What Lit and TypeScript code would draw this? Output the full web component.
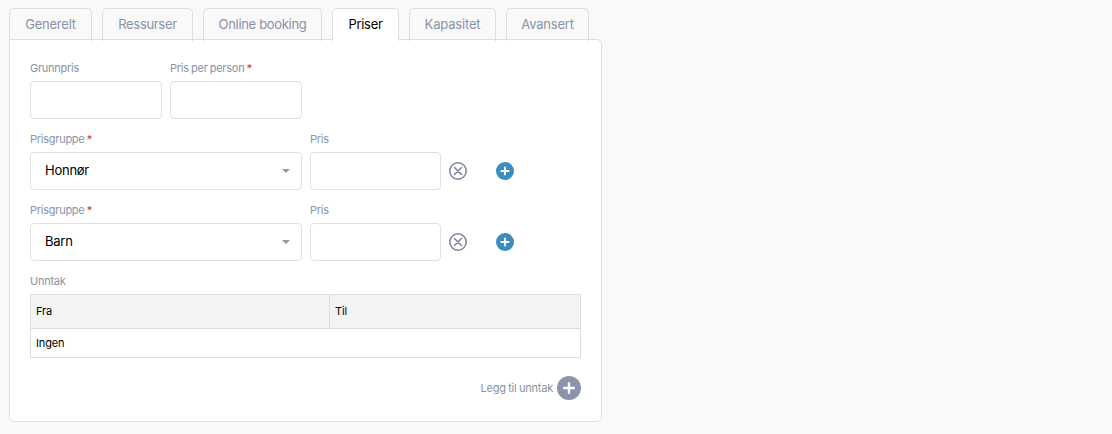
import { LitElement, html, css, svg } from "lit";
import { customElement, property, state } from "lit/decorators.js";
import { classMap } from "lit/directives/class-map.js";

const removeIcon = svg`<svg width="18" height="18" viewBox="0 0 18 18" fill="none" stroke="#7c839a">
  <circle cx="9" cy="9" r="8.2" stroke-width="1.5"/>
  <path d="M5.5 5.5 12.5 12.5M12.5 5.5 5.5 12.5" stroke-width="1.5" stroke-linecap="round"/>
</svg>`;

const addIcon = svg`<svg width="18" height="18" viewBox="0 0 18 18">
  <circle cx="9" cy="9" r="9" fill="#3b8dbd"/>
  <path d="M9 5.4V12.6M5.4 9H12.6" stroke="#fff" stroke-width="1.9" stroke-linecap="round"/>
</svg>`;

const addLargeIcon = svg`<svg width="24" height="24" viewBox="0 0 24 24">
  <circle cx="12" cy="12" r="12" fill="#8c93aa"/>
  <path d="M12 7.2V16.8M7.2 12H16.8" stroke="#fff" stroke-width="2.4" stroke-linecap="round"/>
</svg>`;

@customElement("form-field")
export class FormField extends LitElement {
  @property() label = "";
  @property({ type: Boolean }) required = false;

  static styles = css`
    :host { display: block; }
    .label {
      height: 13px;
      line-height: 13px;
      margin-bottom: 6px;
      font-size: 11px;
      letter-spacing: -0.26px;
      word-spacing: -0.6px;
      color: #8893a7;
      white-space: nowrap;
    }
    .star { color: #d5302c; }
  `;

  render() {
    return html`
      <div class="label">${this.label}${this.required ? html` <span class="star">*</span>` : ""}</div>
      <slot></slot>
    `;
  }
}

@customElement("app-root")
export class AppRoot extends LitElement {
  @state() private active = "Priser";

  private tabs = [
    { name: "Generelt", cls: "w83" },
    { name: "Ressurser", cls: "w91" },
    { name: "Online booking", cls: "w119" },
    { name: "Priser", cls: "w67" },
    { name: "Kapasitet", cls: "w87" },
    { name: "Avansert", cls: "w83" },
  ];
  private groups = ["Honnør", "Barn"];

  static styles = css`
    * { box-sizing: border-box; }
    :host {
      display: block;
      min-height: 434px;
      padding: 8px 0 0 9px;
      background: #f9f9f9;
      font-family: Inter, Roboto, sans-serif;
      color: #000;
    }
    .tabs { display: flex; gap: 10px; }
    .tab {
      position: relative;
      z-index: 1;
      height: 33px;
      margin: 0 0 -2px;
      padding: 0 0 2px;
      border: 1px solid #dedede;
      border-bottom: 0;
      border-radius: 5px 5px 0 0;
      background: transparent;
      font: inherit;
      font-size: 13px;
      line-height: 30px;
      letter-spacing: -0.32px;
      text-align: center;
      white-space: nowrap;
      color: #8893a7;
    }
    .tab.active { background: #fff; color: #000; }
    .w67 { width: 67px; }
    .w83 { width: 83px; }
    .w87 { width: 87px; }
    .w91 { width: 91px; }
    .w119 { width: 119px; }
    .tab.w83 { letter-spacing: -0.22px; }
    .tab.w87 { letter-spacing: -0.18px; }
    .panel {
      width: 593px;
      height: 383px;
      padding: 22px 20px 0;
      border: 1px solid #dedede;
      border-radius: 0 5px 5px 5px;
      background: #fff;
    }
    .row { display: flex; gap: 8px; margin-bottom: 14px; }
    .box {
      display: flex;
      align-items: center;
      justify-content: space-between;
      height: 38px;
      border: 1px solid #e0e0e0;
      border-radius: 4px;
      background: #fff;
    }
    .short { width: 132px; }
    .price { width: 131px; }
    .select {
      width: 272px;
      padding: 0 11px 0 14px;
      font-size: 13px;
      letter-spacing: -0.25px;
    }
    .value { padding-bottom: 2px; }
    .caret {
      border: 4px solid transparent;
      border-top-color: #999;
      border-bottom: 0;
    }
    .actions {
      display: flex;
      gap: 29px;
      padding-top: 29px;
    }
    .icon {
      display: block;
      padding: 0;
      border: 0;
      background: none;
      height: 18px;
      line-height: 0;
    }
    .table {
      width: 551px;
      border: 1px solid #dedede;
      font-size: 11px;
      letter-spacing: -0.15px;
    }
    .head {
      display: grid;
      grid-template-columns: 298px 1fr;
      height: 34px;
      line-height: 33px;
      background: #f3f3f3;
      border-bottom: 1px solid #dedede;
    }
    .cell { padding-left: 5px; }
    .cell + .cell { border-left: 1px solid #dedede; }
    .body { height: 28px; line-height: 29px; }
    .footer {
      display: flex;
      align-items: center;
      justify-content: flex-end;
      gap: 4px;
      margin-top: 18px;
      font-size: 11px;
      letter-spacing: -0.22px;
      word-spacing: -0.4px;
      color: #8893a7;
    }
    .footer svg { display: block; }
  `;

  render() {
    return html`
      <div class="tabs">
        ${this.tabs.map(
          (t) => html`<button
            class=${classMap({ tab: true, [t.cls]: true, active: t.name === this.active })}
            @click=${() => (this.active = t.name)}
          >${t.name}</button>`
        )}
      </div>
      <div class="panel">
        <div class="row">
          <form-field label="Grunnpris"><div class="box short"></div></form-field>
          <form-field label="Pris per person" required><div class="box short"></div></form-field>
        </div>
        ${this.groups.map(
          (g) => html`<div class="row">
            <form-field label="Prisgruppe" required>
              <div class="box select"><span class="value">${g}</span><span class="caret"></span></div>
            </form-field>
            <form-field label="Pris"><div class="box price"></div></form-field>
            <div class="actions">
              <button class="icon" aria-label="Fjern">${removeIcon}</button>
              <button class="icon" aria-label="Legg til">${addIcon}</button>
            </div>
          </div>`
        )}
        <form-field label="Unntak">
          <div class="table">
            <div class="head"><div class="cell">Fra</div><div class="cell">Til</div></div>
            <div class="body cell">Ingen</div>
          </div>
        </form-field>
        <div class="footer"><span>Legg til unntak</span>${addLargeIcon}</div>
      </div>
    `;
  }
}
